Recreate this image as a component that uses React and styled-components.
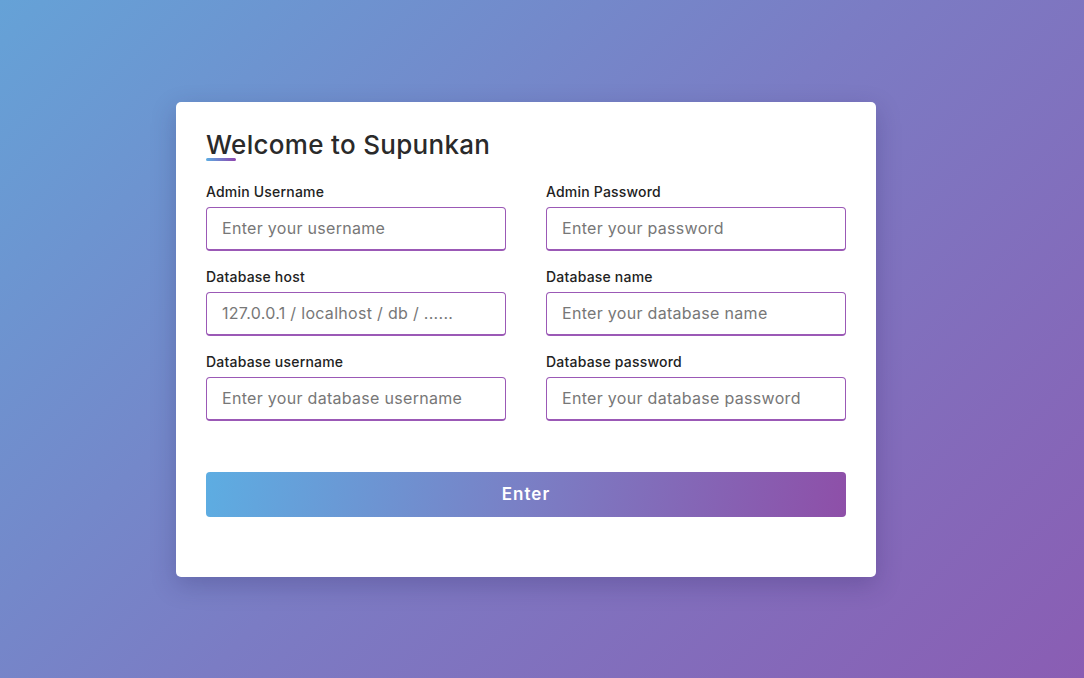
import React from "react";
import styled, { createGlobalStyle } from "styled-components";

const GlobalStyle = createGlobalStyle`
  * { box-sizing: border-box; }
  html, body { margin: 0; padding: 0; height: 100%; }
  body {
    font-family: Inter, "Open Sans", sans-serif;
    background: linear-gradient(135deg, #65a2d7 0%, #7b7cc4 50%, #8a5db3 100%);
    min-height: 100vh;
  }
  #root { min-height: 100vh; }
`;

const Page = styled.div`
  min-height: 100vh;
  display: flex;
  align-items: center;
  justify-content: center;
  padding-right: 32px;
`;

const Card = styled.form`
  width: 700px;
  background: #ffffff;
  border-radius: 5px;
  padding: 30px 30px 60px;
  box-shadow: 0 8px 24px rgba(40, 30, 90, 0.25);
`;

const Title = styled.h2`
  margin: 0;
  font-size: 26px;
  line-height: 26px;
  height: 24px;
  font-weight: 500;
  letter-spacing: 0.3px;
  color: #2a2a2a;
`;

const Underline = styled.div`
  width: 30px;
  height: 3px;
  margin-top: 2px;
  border-radius: 2px;
  background: linear-gradient(90deg, #5dade2, #8e44ad);
`;

const Grid = styled.div`
  display: grid;
  grid-template-columns: 1fr 1fr;
  column-gap: 40px;
  row-gap: 17px;
  margin-top: 22px;
`;

const Field = styled.div`
  display: flex;
  flex-direction: column;
`;

const Label = styled.label`
  font-size: 14px;
  line-height: 18px;
  font-weight: 500;
  letter-spacing: 0.2px;
  color: #222;
  margin-bottom: 6px;
`;

const Input = styled.input`
  height: 44px;
  width: 100%;
  border: 1px solid #9b59b6;
  border-bottom-width: 2px;
  border-radius: 4px;
  padding: 0 15px;
  font-family: inherit;
  font-size: 16px;
  letter-spacing: 0.3px;
  color: #333;
  outline: none;
  &::placeholder { color: #777; }
`;

const Button = styled.button`
  display: block;
  width: 100%;
  height: 45px;
  margin-top: 51px;
  border: none;
  border-radius: 4px;
  background: linear-gradient(100deg, #5dade2 0%, #7a7fc5 50%, #8e4fa8 100%);
  color: #fff;
  font-family: inherit;
  font-size: 17px;
  font-weight: 600;
  letter-spacing: 1px;
  cursor: pointer;
`;

const fields = [
  ["Admin Username", "Enter your username", "text"],
  ["Admin Password", "Enter your password", "password"],
  ["Database host", "127.0.0.1 / localhost / db / ......", "text"],
  ["Database name", "Enter your database name", "text"],
  ["Database username", "Enter your database username", "text"],
  ["Database password", "Enter your database password", "password"],
];

export default function App() {
  return (
    <>
      <GlobalStyle />
      <Page>
        <Card onSubmit={(e) => e.preventDefault()}>
          <Title>Welcome to Supunkan</Title>
          <Underline />
          <Grid>
            {fields.map(([label, ph, type]) => (
              <Field key={label}>
                <Label>{label}</Label>
                <Input type={type} placeholder={ph} />
              </Field>
            ))}
          </Grid>
          <Button type="submit">Enter</Button>
        </Card>
      </Page>
    </>
  );
}
